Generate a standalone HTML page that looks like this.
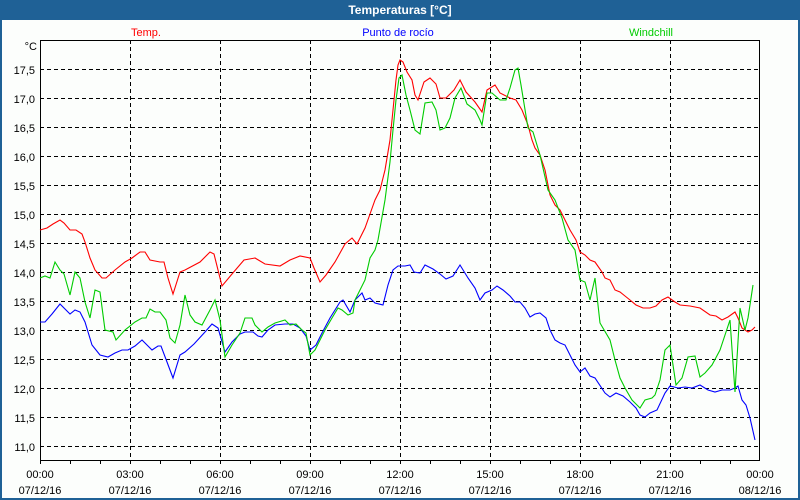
<!DOCTYPE html>
<html><head><meta charset="utf-8"><style>
html,body{margin:0;padding:0;background:#fff;}
svg{display:block;font-family:"Liberation Sans","DejaVu Sans",sans-serif;}
</style></head><body>
<svg width="800" height="500" xmlns="http://www.w3.org/2000/svg">
<rect x="0" y="0" width="800" height="500" fill="#1f6196"/>
<rect x="2" y="20" width="796" height="478" fill="#fcfefc"/>
<text x="400" y="14" text-anchor="middle" fill="#fff" font-size="12" font-weight="bold">Temperaturas [°C]</text>
<text x="146" y="36" text-anchor="middle" fill="#f00" font-size="11">Temp.</text>
<text x="398" y="36" text-anchor="middle" fill="#00f" font-size="11">Punto de rocío</text>
<text x="651" y="36" text-anchor="middle" fill="#0c0" font-size="11">Windchill</text>
<g stroke="#000" stroke-width="1" stroke-dasharray="4,3" fill="none" shape-rendering="crispEdges">
<path d="M40 69.5H760M40 98.5H760M40 127.5H760M40 156.5H760M40 185.5H760M40 214.5H760M40 243.5H760M40 272.5H760M40 301.5H760M40 330.5H760M40 359.5H760M40 388.5H760M40 417.5H760M40 446.5H760"/>
<path d="M130.5 40V460M220.5 40V460M310.5 40V460M400.5 40V460M490.5 40V460M580.5 40V460M670.5 40V460"/>
</g>
<rect x="40.5" y="40.5" width="719" height="420" fill="none" stroke="#000" shape-rendering="crispEdges"/>
<g stroke="#000" shape-rendering="crispEdges"><path d="M70.5 460V464M100.5 460V464M130.5 460V464M160.5 460V464M190.5 460V464M220.5 460V464M250.5 460V464M280.5 460V464M310.5 460V464M340.5 460V464M370.5 460V464M400.5 460V464M430.5 460V464M460.5 460V464M490.5 460V464M520.5 460V464M550.5 460V464M580.5 460V464M610.5 460V464M640.5 460V464M670.5 460V464M700.5 460V464M730.5 460V464M40.5 460V464"/></g>
<g font-size="11" fill="#000" text-anchor="end">
<text x="37" y="50">°C</text>
<text x="35" y="74">17,5</text><text x="35" y="103">17,0</text><text x="35" y="132">16,5</text><text x="35" y="161">16,0</text><text x="35" y="190">15,5</text><text x="35" y="219">15,0</text><text x="35" y="248">14,5</text><text x="35" y="277">14,0</text><text x="35" y="306">13,5</text><text x="35" y="335">13,0</text><text x="35" y="364">12,5</text><text x="35" y="393">12,0</text><text x="35" y="422">11,5</text><text x="35" y="451">11,0</text>
</g>
<g font-size="11" fill="#000" text-anchor="middle">
<text x="40" y="478">00:00</text><text x="40" y="494">07/12/16</text>
<text x="130" y="478">03:00</text><text x="130" y="494">07/12/16</text>
<text x="220" y="478">06:00</text><text x="220" y="494">07/12/16</text>
<text x="310" y="478">09:00</text><text x="310" y="494">07/12/16</text>
<text x="400" y="478">12:00</text><text x="400" y="494">07/12/16</text>
<text x="490" y="478">15:00</text><text x="490" y="494">07/12/16</text>
<text x="580" y="478">18:00</text><text x="580" y="494">07/12/16</text>
<text x="670" y="478">21:00</text><text x="670" y="494">07/12/16</text>
<text x="760" y="478">00:00</text><text x="760" y="494">08/12/16</text>
</g>
<g fill="none" stroke-width="1.1">
<polyline stroke="#f00" points="40,230 47,228 53,224 60,220 64,223 70,230 76,230 82,234 85,242 90,258 95,270 102,278 106,278 115,270 125,262 132,258 140,252 145,252 150,260 160,262 164,262 168,278 173,294 180,272 185,270 200,262 210,252 214,254 222,286 232,274 244,260 255,258 265,264 280,266 290,260 300,256 310,258 314,268 320,282 326,275 335,262 345,244 352,238 357,244 365,228 370,214 375,200 380,190 385,170 390,140 393,110 396,80 398,65 400,60 403,62 407,72 412,80 415,95 418,100 424,82 430,78 436,84 440,98 446,98 454,90 460,80 466,92 475,102 482,112 487,90 495,85 500,93 510,98 516,100 522,110 528,125 532,140 535,148 540,155 545,170 550,195 555,205 560,210 565,220 570,230 576,240 580,252 585,255 590,260 595,262 602,272 605,278 610,280 615,290 620,292 625,296 630,300 636,305 643,308 650,308 656,306 662,300 668,297 675,302 680,305 690,306 700,308 710,315 716,316 722,320 728,317 735,312 738,318 742,328 748,332 752,330 755,327"/>
<polyline stroke="#00f" points="40,322 45,322 52,314 60,304 66,310 70,314 75,310 80,312 85,322 92,345 100,355 108,357 115,353 122,350 128,350 135,346 142,340 148,346 152,350 158,346 161,346 170,370 173,378 180,355 185,352 194,344 205,332 212,324 218,328 225,352 232,342 240,334 245,332 253,332 258,336 262,337 268,330 275,325 285,324 293,324 300,328 306,336 310,350 316,345 322,333 330,318 340,302 343,300 350,312 355,300 362,293 365,300 370,298 375,303 383,305 388,285 393,270 398,266 405,266 410,265 414,272 420,273 425,265 433,269 440,274 446,279 453,276 460,265 468,278 475,288 480,300 485,293 492,290 497,286 503,290 510,296 515,302 520,302 525,308 530,317 535,314 540,313 546,318 550,330 555,340 560,343 565,345 570,355 575,365 580,372 585,368 590,376 595,378 605,393 610,397 616,393 623,396 630,402 636,408 640,415 645,417 650,413 657,410 665,393 670,386 678,388 685,387 692,388 700,385 708,390 715,392 722,390 730,390 735,388 738,386 742,400 746,405 750,418 755,440"/>
<polyline stroke="#0c0" points="40,278 45,276 50,278 55,262 60,270 64,274 70,295 75,272 80,278 85,302 90,318 95,290 100,292 105,330 113,332 116,340 125,330 135,322 142,318 146,318 150,309 155,312 160,312 166,320 170,338 175,343 180,325 185,295 190,315 195,322 202,325 210,310 215,300 220,320 225,357 232,345 240,333 245,318 252,318 255,325 262,332 268,327 275,323 285,320 290,325 296,324 302,330 306,333 310,355 315,350 320,340 325,330 332,318 338,308 342,310 348,315 353,313 355,300 360,290 365,280 370,258 375,250 378,240 385,200 390,162 393,130 396,100 399,78 402,75 406,95 410,110 415,130 420,134 425,103 432,102 436,110 440,130 445,128 450,118 455,98 461,88 467,104 475,110 480,120 482,125 487,93 492,93 500,100 506,100 510,88 515,70 518,68 521,85 528,128 533,132 540,155 548,190 555,200 562,218 568,240 575,250 580,280 585,282 590,300 595,278 600,323 610,340 615,360 620,378 625,388 632,400 640,408 645,400 652,398 655,395 660,380 665,350 670,345 676,385 682,378 688,357 695,356 700,377 705,373 712,365 720,350 730,320 735,392 740,308 745,330 748,318 753,285"/>
</g>
</svg>
</body></html>
